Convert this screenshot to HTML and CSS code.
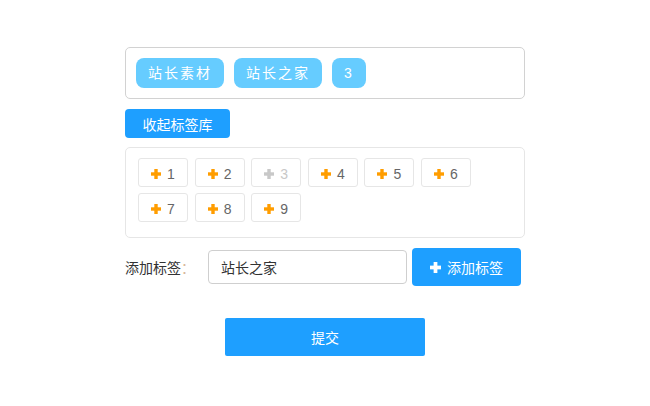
FILE: index.html
```html
<!DOCTYPE html>
<html lang="zh">
<head>
<meta charset="utf-8">
<title>标签</title>
<link rel="stylesheet" href="styles.css">
</head>
<body>
<div class="wrap">
  <div class="selected">
    <span class="tag">站长素材</span>
    <span class="tag">站长之家</span>
    <span class="tag">3</span>
  </div>
  <button class="btn btn-toggle">收起标签库</button>
  <div class="library">
    <span class="item"><svg class="plus" viewBox="0 0 10 10"><rect x="3.3" y="0" width="3.4" height="10"/><rect x="0" y="3.3" width="10" height="3.4"/></svg>1</span>
    <span class="item"><svg class="plus" viewBox="0 0 10 10"><rect x="3.3" y="0" width="3.4" height="10"/><rect x="0" y="3.3" width="10" height="3.4"/></svg>2</span>
    <span class="item disabled"><svg class="plus" viewBox="0 0 10 10"><rect x="3.3" y="0" width="3.4" height="10"/><rect x="0" y="3.3" width="10" height="3.4"/></svg>3</span>
    <span class="item"><svg class="plus" viewBox="0 0 10 10"><rect x="3.3" y="0" width="3.4" height="10"/><rect x="0" y="3.3" width="10" height="3.4"/></svg>4</span>
    <span class="item"><svg class="plus" viewBox="0 0 10 10"><rect x="3.3" y="0" width="3.4" height="10"/><rect x="0" y="3.3" width="10" height="3.4"/></svg>5</span>
    <span class="item"><svg class="plus" viewBox="0 0 10 10"><rect x="3.3" y="0" width="3.4" height="10"/><rect x="0" y="3.3" width="10" height="3.4"/></svg>6</span>
    <span class="item"><svg class="plus" viewBox="0 0 10 10"><rect x="3.3" y="0" width="3.4" height="10"/><rect x="0" y="3.3" width="10" height="3.4"/></svg>7</span>
    <span class="item"><svg class="plus" viewBox="0 0 10 10"><rect x="3.3" y="0" width="3.4" height="10"/><rect x="0" y="3.3" width="10" height="3.4"/></svg>8</span>
    <span class="item"><svg class="plus" viewBox="0 0 10 10"><rect x="3.3" y="0" width="3.4" height="10"/><rect x="0" y="3.3" width="10" height="3.4"/></svg>9</span>
  </div>
  <div class="add-row">
    <label class="label">添加标签<span class="colon">：</span></label>
    <input class="input" type="text" value="站长之家">
    <button class="btn btn-add"><svg class="plus plus-white" viewBox="0 0 10 10"><rect x="3.3" y="0" width="3.4" height="10"/><rect x="0" y="3.3" width="10" height="3.4"/></svg>添加标签</button>
  </div>
  <div class="submit-row">
    <button class="btn btn-submit">提交</button>
  </div>
</div>
</body>
</html>
```
FILE: styles.css
```css
html, body {
  margin: 0;
  padding: 0;
  background: #fff;
}
body {
  font-family: "Liberation Sans", "Noto Sans CJK SC", sans-serif;
  font-size: 14px;
  color: #333;
}
.wrap {
  width: 400px;
  margin: 0 auto;
  padding-top: 47px;
}
.selected {
  box-sizing: border-box;
  height: 52px;
  border: 1px solid #d2d2d2;
  border-radius: 5px;
  padding: 10px 10px;
  display: flex;
  gap: 10px;
}
.tag {
  height: 30px;
  line-height: 30px;
  padding: 0 12px;
  background: #66ccff;
  color: #fff;
  border-radius: 8px;
  font-size: 14px;
  letter-spacing: 2px;
}
.btn {
  border: none;
  background: #1e9fff;
  color: #fff;
  font-family: inherit;
  font-size: 14px;
  padding: 0;
  cursor: pointer;
}
.btn-toggle {
  display: block;
  margin-top: 10px;
  width: 105px;
  height: 29px;
  border-radius: 4px;
}
.library {
  box-sizing: border-box;
  margin-top: 9px;
  height: 91px;
  border: 1px solid #e6e6e6;
  border-radius: 5px;
  padding: 10px 12px 15px;
  display: flex;
  flex-wrap: wrap;
  column-gap: 6.6px;
  row-gap: 6px;
  align-content: flex-start;
}
.item {
  box-sizing: border-box;
  width: 50px;
  height: 29px;
  border: 1px solid #e6e6e6;
  border-radius: 3px;
  display: flex;
  align-items: center;
  justify-content: center;
  gap: 6px;
  padding-top: 2px;
  color: #666;
  font-size: 14px;
}
.plus {
  width: 10px;
  height: 10px;
  fill: #ff9d00;
  flex: none;
}
.item.disabled {
  color: #c8c8c8;
}
.item.disabled .plus {
  fill: #c8c8c8;
}
.add-row {
  margin-top: 10px;
  display: flex;
  align-items: center;
  height: 38px;
}
.label {
  width: 83px;
  font-size: 14px;
  color: #333;
}
.colon {
  color: #d8b89a;
}
.input {
  box-sizing: border-box;
  width: 199px;
  height: 34px;
  border: 1px solid #cfcfcf;
  border-radius: 4px;
  padding: 0 12px;
  font-family: inherit;
  font-size: 14px;
  color: #333;
  outline: none;
}
.btn-add {
  margin-left: 5px;
  width: 109px;
  height: 38px;
  border-radius: 4px;
  display: flex;
  align-items: center;
  justify-content: center;
  gap: 6px;
}
.plus-white {
  fill: #fff;
  width: 11px;
  height: 11px;
}
.submit-row {
  margin-top: 32px;
  display: flex;
  justify-content: center;
}
.btn-submit {
  width: 200px;
  height: 38px;
  border-radius: 2px;
}
```
